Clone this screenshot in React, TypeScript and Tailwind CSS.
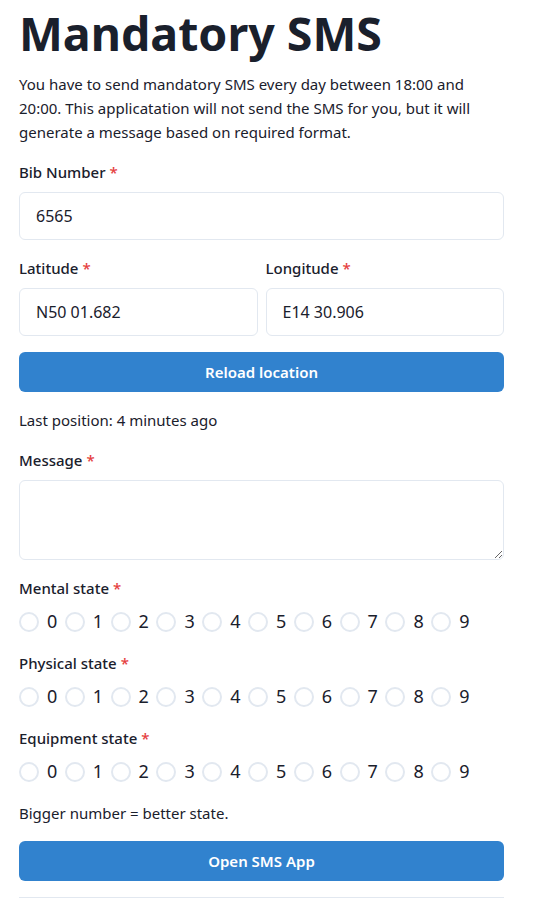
const digits = [0, 1, 2, 3, 4, 5, 6, 7, 8, 9];

const Star = () => <span className="ml-1 text-[#e53e3e]">*</span>;

const Label = ({ children }: { children: string }) => (
  <label className="mb-2 block text-[15px] leading-6 font-medium text-[#1a202c]">
    {children}
    <Star />
  </label>
);

const TextInput = ({ value }: { value: string }) => (
  <input
    defaultValue={value}
    className="h-12 w-full rounded-md border border-[#e2e8f0] bg-white px-4 text-base text-[#1a202c] outline-none"
  />
);

const RadioRow = ({ name }: { name: string }) => (
  <div className="flex h-[27px] items-center gap-[7.5px]">
    {digits.map((d) => (
      <label key={d} className="flex items-center">
        <input type="radio" name={name} className="peer sr-only" />
        <span className="h-5 w-5 rounded-full border-2 border-[#e2e8f0] bg-white" />
        <span className="ml-2 text-lg leading-[27px] text-[#1a202c]">{d}</span>
      </label>
    ))}
  </div>
);

const BlueButton = ({ children }: { children: string }) => (
  <button className="h-10 w-full rounded-md bg-[#3182ce] text-[15px] font-semibold text-white">
    {children}
  </button>
);

export default function App() {
  return (
    <div
      className="min-h-screen bg-white pl-[19px] text-[#1a202c]"
      style={{ fontFamily: '"Noto Sans", "Open Sans", sans-serif' }}
    >
      <div className="flex w-[485px] flex-col gap-4">
        <h1 className="pt-[10px] text-[46.5px] leading-[46px] font-bold">
          Mandatory SMS
        </h1>

        <p className="text-[15px] leading-6">
          You have to send mandatory SMS every day between 18:00 and 20:00. This
          applicatation will not send the SMS for you, but it will generate a
          message based on required format.
        </p>

        {/* Bib */}
        <div>
          <Label>Bib Number</Label>
          <TextInput value="6565" />
        </div>

        {/* Position */}
        <div className="grid grid-cols-2 gap-2">
          <div>
            <Label>Latitude</Label>
            <TextInput value="N50 01.682" />
          </div>
          <div>
            <Label>Longitude</Label>
            <TextInput value="E14 30.906" />
          </div>
        </div>

        <BlueButton>Reload location</BlueButton>

        <p className="text-[15px] leading-6">Last position: 4 minutes ago</p>

        <div>
          <Label>Message</Label>
          <textarea className="block h-20 w-full rounded-md border border-[#e2e8f0] px-4 py-2 text-base outline-none" />
        </div>

        <div>
          <Label>Mental state</Label>
          <RadioRow name="mental" />
        </div>

        <div>
          <Label>Physical state</Label>
          <RadioRow name="physical" />
        </div>

        <div>
          <Label>Equipment state</Label>
          <RadioRow name="equipment" />
        </div>

        <p className="text-[15px] leading-6">Bigger number = better state.</p>

        <BlueButton>Open SMS App</BlueButton>

        <hr className="border-t border-[#e2e8f0]" />
      </div>
    </div>
  );
}
